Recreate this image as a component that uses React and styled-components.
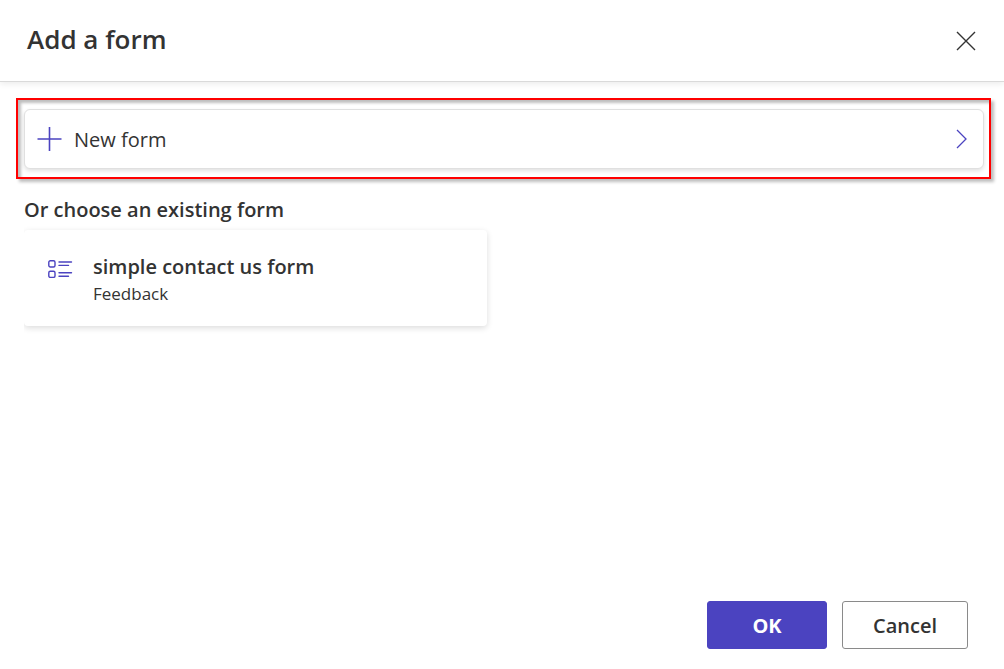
import React from "react";
import styled, { createGlobalStyle } from "styled-components";

const GlobalStyle = createGlobalStyle`
  * { box-sizing: border-box; }
  body { margin: 0; background: #fff; }
  body, button { font-family: "Segoe UI", "Open Sans", sans-serif; color: #333; }
`;

const Dialog = styled.div`
  display: flex;
  flex-direction: column;
  min-height: 100vh;
`;

const Header = styled.header`
  display: flex;
  align-items: center;
  justify-content: space-between;
  height: 82px;
  padding: 0 22px 0 27px;
  border-bottom: 1px solid #dadada;
  box-shadow: 0 2px 6px rgba(0, 0, 0, 0.08);
`;

const Title = styled.h1`
  margin: 0 0 4px;
  font-size: 26px;
  line-height: 32px;
  font-weight: 560;
`;

const CloseButton = styled.button`
  display: flex;
  padding: 6px;
  border: 0;
  background: none;
`;

const Content = styled.main`
  flex: 1;
  padding: 16px 13px 24px 16px;
`;

const Highlight = styled.div`
  padding: 9px 5px 8px 6px;
  border: 2px solid #f00;
  box-shadow: 3px 3px 3px rgba(0, 0, 0, 0.26), inset 3px 3px 3px rgba(0, 0, 0, 0.26);
`;

const NewFormButton = styled.button`
  display: flex;
  align-items: center;
  gap: 11px;
  width: 100%;
  height: 60px;
  padding: 0 15px 0 12px;
  border: 1px solid #e0e0e0;
  border-radius: 6px;
  background: #fff;
  box-shadow: 0 2px 4px rgba(0, 0, 0, 0.12);
  font-size: 20px;
  line-height: 28px;
  text-align: left;
`;

const ButtonText = styled.span`
  flex: 1;
  padding-top: 2px;
`;

const SectionTitle = styled.h2`
  margin: 17px 8px 6px;
  font-size: 20px;
  line-height: 28px;
  font-weight: 560;
`;

const FormCard = styled.button`
  display: flex;
  align-items: flex-start;
  gap: 20px;
  width: calc(50% - 25px);
  height: 96px;
  margin-left: 8px;
  padding: 23px 24px;
  border: 0;
  border-radius: 4px;
  background: #fff;
  box-shadow: 0 2px 6px rgba(0, 0, 0, 0.14);
  clip-path: inset(-12px -12px -12px 0);
  text-align: left;
`;

const CardText = styled.span`
  display: flex;
  flex-direction: column;
`;

const CardTitle = styled.span`
  font-size: 20px;
  line-height: 28px;
  font-weight: 560;
`;

const CardType = styled.span`
  font-size: 17px;
  line-height: 26px;
`;

const ListIcon = styled.svg`
  margin-top: 5px;
`;

const Footer = styled.footer`
  display: flex;
  justify-content: flex-end;
  gap: 15px;
  padding: 0 36px 20px;
`;

const ActionButton = styled.button`
  width: ${(p) => (p.$primary ? 120 : 126)}px;
  height: 48px;
  padding: 0;
  border: 1px solid ${(p) => (p.$primary ? "#4b43c0" : "#8a8a8a")};
  border-radius: 3px;
  background: ${(p) => (p.$primary ? "#4b43c0" : "#fff")};
  color: ${(p) => (p.$primary ? "#fff" : "#333")};
  font-size: 20px;
  font-weight: ${(p) => (p.$primary ? 700 : 560)};
`;

export default function App() {
  return (
    <Dialog role="dialog" aria-labelledby="dialog-title">
      <GlobalStyle />
      <Header>
        <Title id="dialog-title">Add a form</Title>
        <CloseButton type="button" aria-label="Close">
          <svg width="20" height="20" fill="none" stroke="#333" strokeWidth="1.4">
            <path d="M1 1 19 19M19 1 1 19" />
          </svg>
        </CloseButton>
      </Header>
      <Content>
        <Highlight>
          <NewFormButton type="button">
            <svg width="26" height="26" fill="none" stroke="#4b43c0" strokeWidth="1.6">
              <path d="M12.5 1V25M0.5 13H24.5" />
            </svg>
            <ButtonText>New form</ButtonText>
            <svg width="14" height="20" fill="none" stroke="#4b43c0" strokeWidth="1.3">
              <path d="m3 1 9 9-9 9" />
            </svg>
          </NewFormButton>
        </Highlight>
        <SectionTitle>Or choose an existing form</SectionTitle>
        <FormCard type="button">
          <ListIcon width="25" height="22" fill="none" stroke="#4b43c0" strokeWidth="1.4">
            <rect x="0.8" y="2.8" width="6.2" height="6.2" rx="1.5" />
            <rect x="0.8" y="13.2" width="6.2" height="6.2" rx="1.5" />
            <path d="M11 4H23.5M11 7.4H20.5M11 14.8H23.5M11 18.2H20.5" strokeLinecap="round" />
          </ListIcon>
          <CardText>
            <CardTitle>simple contact us form</CardTitle>
            <CardType>Feedback</CardType>
          </CardText>
        </FormCard>
      </Content>
      <Footer>
        <ActionButton type="submit" $primary>OK</ActionButton>
        <ActionButton type="button">Cancel</ActionButton>
      </Footer>
    </Dialog>
  );
}
